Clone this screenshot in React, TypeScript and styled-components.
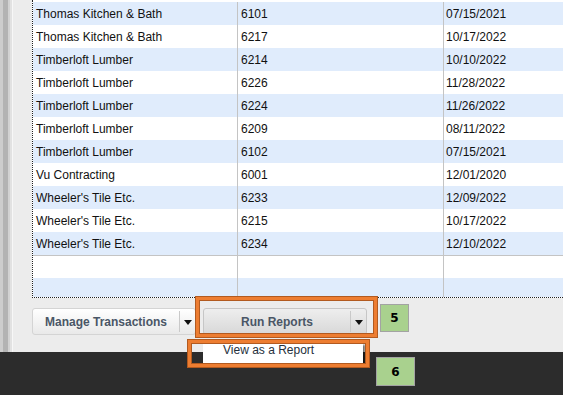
import styled, { createGlobalStyle } from 'styled-components'

const GlobalStyle = createGlobalStyle`
    html, body {
        margin: 0;
        padding: 0;
        background: #2c2c2c;
    }
    * {
        box-sizing: border-box;
    }
`

const transactions = [
    ['Thomas Kitchen & Bath', '6101', '07/15/2021'],
    ['Thomas Kitchen & Bath', '6217', '10/17/2022'],
    ['Timberloft Lumber', '6214', '10/10/2022'],
    ['Timberloft Lumber', '6226', '11/28/2022'],
    ['Timberloft Lumber', '6224', '11/26/2022'],
    ['Timberloft Lumber', '6209', '08/11/2022'],
    ['Timberloft Lumber', '6102', '07/15/2021'],
    ['Vu Contracting', '6001', '12/01/2020'],
    ["Wheeler's Tile Etc.", '6233', '12/09/2022'],
    ["Wheeler's Tile Etc.", '6215', '10/17/2022'],
    ["Wheeler's Tile Etc.", '6234', '12/10/2022'],
]

function Caret() {
    return (
        <svg width="8" height="5" viewBox="0 0 8 5">
            <path d="M0 0 H8 L4 5 Z" fill="#111" />
        </svg>
    )
}

export default function App() {
    return (
        <>
            <GlobalStyle />
            <Screen>
                <Main>
                    <SideStrip />
                    <Panel>
                        <Grid>
                            <TopGap />
                            {transactions.map((t, i) => (
                                <Row key={i} $alt={i % 2 === 0}>
                                    <NameCell>{t[0]}</NameCell>
                                    <NumCell>{t[1]}</NumCell>
                                    <DateCell>{t[2]}</DateCell>
                                </Row>
                            ))}
                            <RowRule />
                            <Row $alt={false} $height={22}>
                                <NameCell />
                                <NumCell />
                                <DateCell />
                            </Row>
                            <Row $alt={true} $height={19}>
                                <NameCell />
                                <NumCell />
                                <DateCell />
                            </Row>
                        </Grid>
                        <ButtonBar>
                            <SplitButton>
                                <ButtonLabel>Manage Transactions</ButtonLabel>
                                <ButtonDivider />
                                <CaretBox><Caret /></CaretBox>
                            </SplitButton>
                            <MenuAnchor>
                                <SplitButton $pressed>
                                    <ButtonLabel>Run Reports</ButtonLabel>
                                    <ButtonDivider />
                                    <CaretBox><Caret /></CaretBox>
                                </SplitButton>
                                <DropMenu>
                                    <MenuItem>View as a Report</MenuItem>
                                </DropMenu>
                            </MenuAnchor>
                        </ButtonBar>
                    </Panel>
                </Main>
                <DarkBand />

                <Callout style={{ left: 196, top: 297, width: 181, height: 40 }} />
                <Callout style={{ left: 188, top: 340, width: 181, height: 27 }} />
                <StepBadge style={{ left: 380, top: 304, width: 29, height: 28 }}>5</StepBadge>
                <StepBadge style={{ left: 376, top: 357, width: 39, height: 29 }}>6</StepBadge>
            </Screen>
        </>
    )
}

const Screen = styled.div`
    position: relative;
    width: 563px;
    height: 395px;
    overflow: hidden;
    display: flex;
    flex-direction: column;
    font-family: 'Liberation Sans', Arial, sans-serif;
`

const Main = styled.div`
    display: flex;
    height: 352px;
`

const SideStrip = styled.div`
    width: 13px;
    background: linear-gradient(to right,
        #cdcdcd 0, #cdcdcd 3px,
        #b3b3b3 3px, #b3b3b3 8px,
        #d2d2d2 8px, #d2d2d2 10px,
        #e2e2e2 10px, #e2e2e2 12px,
        #f7f7f7 12px);
`

const Panel = styled.div`
    flex: 1;
    display: flex;
    flex-direction: column;
    background: #ececec;
    padding-left: 19px;
`

const Grid = styled.div`
    display: flex;
    flex-direction: column;
    background: #fff;
    border-left: 1px dotted #222;
    border-bottom: 1px dotted #222;
`

const TopGap = styled.div`
    height: 2px;
    background: #fff;
`

const Row = styled.div<{ $alt: boolean; $height?: number }>`
    display: grid;
    grid-template-columns: 205px 206px 1fr;
    height: ${p => p.$height ?? 23}px;
    background: ${p => (p.$alt ? '#e0ecfc' : '#fff')};
    font-size: 12px;
    color: #111;
`

const Cell = styled.div`
    display: flex;
    align-items: center;
    white-space: nowrap;
    overflow: hidden;
`

const NameCell = styled(Cell)`
    padding-left: 3px;
    border-right: 1px solid #c4c4c4;
`

const NumCell = styled(Cell)`
    padding-left: 3px;
    border-right: 1px solid #c4c4c4;
`

const DateCell = styled(Cell)`
    padding-left: 2px;
`

const RowRule = styled.div`
    height: 1px;
    background: #c4c4c4;
`

const ButtonBar = styled.div`
    display: flex;
    gap: 7px;
    padding-top: 10px;
    align-items: flex-start;
`

const MenuAnchor = styled.div`
    position: relative;
`

const SplitButton = styled.div<{ $pressed?: boolean }>`
    display: flex;
    width: 164px;
    height: 27px;
    border: 1px solid ${p => (p.$pressed ? '#c6c6c6' : '#d4d4d4')};
    border-radius: 3px;
    background: ${p => (p.$pressed
        ? 'linear-gradient(#eeeeee, #d8d8d8)'
        : 'linear-gradient(#ffffff, #e9e9e9)')};
`

const ButtonLabel = styled.div`
    width: 146px;
    display: flex;
    align-items: center;
    justify-content: center;
    font-size: 12px;
    font-weight: bold;
    color: #4a5666;
`

const ButtonDivider = styled.div`
    width: 1px;
    margin: 2px 0;
    background: #c9c9c9;
`

const CaretBox = styled.div`
    flex: 1;
    display: flex;
    align-items: center;
    justify-content: center;
    padding-top: 1px;
`

const DropMenu = styled.div`
    position: absolute;
    left: 0;
    top: 35px;
    width: 160px;
    height: 20px;
    background: #fff;
    box-shadow: 2px 2px 2px rgba(0, 0, 0, 0.55);
`

const MenuItem = styled.div`
    padding: 1px 0 0 20px;
    font-size: 12px;
    line-height: 12px;
    color: #26303c;
`

const DarkBand = styled.div`
    flex: 1;
    background: #2c2c2c;
`

const Callout = styled.div`
    position: absolute;
    border: 3px solid #ed7d31;
    box-shadow: 0 0 0 1px #b25a20, inset 0 0 0 1px #b25a20;
`

const StepBadge = styled.div`
    position: absolute;
    display: flex;
    align-items: center;
    justify-content: center;
    background: #a9d18e;
    border: 1px solid #a3a3a3;
    font-family: 'DejaVu Sans', sans-serif;
    font-weight: bold;
    font-size: 12px;
    color: #000;
`
